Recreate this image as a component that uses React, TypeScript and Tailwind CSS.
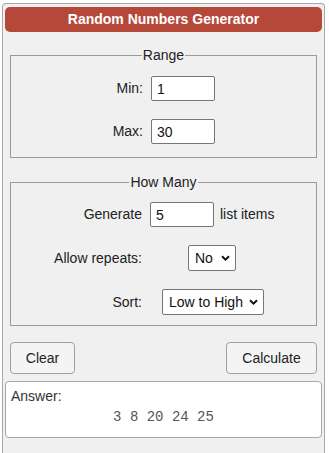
import React from "react";

function Chevron() {
  return (
    <svg width="9" height="6" viewBox="0 0 9 6" className="absolute right-[6px] top-1/2 -translate-y-1/2 pointer-events-none">
      <path d="M1 1.2 L4.5 4.6 L8 1.2" fill="none" stroke="#111" strokeWidth="1.9" />
    </svg>
  );
}

function Select({ value, options, w }: { value: string; options: string[]; w: string }) {
  return (
    <div className={`relative h-[26px] ${w}`}>
      <select
        defaultValue={value}
        className="appearance-none w-full h-full bg-white border border-[#767676] rounded-[2px] pl-[6px] pr-[16px] text-[14px] text-[#111] outline-none"
        style={{ fontFamily: '"Liberation Sans", Arial, sans-serif' }}
      >
        {options.map((o) => (
          <option key={o}>{o}</option>
        ))}
      </select>
      <Chevron />
    </div>
  );
}

function NumInput({ value }: { value: string }) {
  return (
    <input
      type="text"
      defaultValue={value}
      className="w-[64px] h-[25px] bg-white border border-[#767676] rounded-[2px] px-[5px] text-[14px] text-[#111] outline-none"
      style={{ fontFamily: '"Liberation Sans", Arial, sans-serif' }}
    />
  );
}

export default function App() {
  return (
    <div
      className="min-h-screen bg-white text-[14px] text-[#222] overflow-hidden"
      style={{ fontFamily: '"Liberation Sans", Arial, sans-serif' }}
    >
      <div className="ml-[2px] mt-[3px] w-[323px] h-[450px] border border-b-0 border-[#a8a8a8] rounded-t-[4px] bg-[#f0f0f0] px-[2px] pt-[3px]">
        <div className="h-[25px] rounded-[5px] bg-[#b6483a] text-white font-bold text-[14px] leading-[25px] text-center">
          Random Numbers Generator
        </div>

        <fieldset className="mx-[5px] mt-[15px] border border-[#9a9a9a] pb-[13px]">
          <legend className="mx-auto px-[1px] leading-[16px]">Range</legend>
          <div className="flex flex-col gap-[18px] pt-[13px]">
            <div className="flex items-center">
              <span className="w-[132px] text-right">Min:</span>
              <div className="ml-[8px]">
                <NumInput value="1" />
              </div>
            </div>
            <div className="flex items-center">
              <span className="w-[132px] text-right">Max:</span>
              <div className="ml-[8px]">
                <NumInput value="30" />
              </div>
            </div>
          </div>
        </fieldset>

        <fieldset className="mx-[5px] mt-[16px] border border-[#9a9a9a] pb-[10px]">
          <legend className="mx-auto px-[1px] leading-[16px]">How Many</legend>
          <div className="flex flex-col gap-[18px] pt-[12px]">
            <div className="flex items-center">
              <span className="w-[131px] text-right">Generate</span>
              <div className="ml-[8px]">
                <NumInput value="5" />
              </div>
              <span className="ml-[6px]">list items</span>
            </div>
            <div className="flex items-center">
              <span className="w-[131px] text-right">Allow repeats:</span>
              <div className="ml-[46px]">
                <Select value="No" options={["No", "Yes"]} w="w-[48px]" />
              </div>
            </div>
            <div className="flex items-center">
              <span className="w-[131px] text-right">Sort:</span>
              <div className="ml-[20px]">
                <Select value="Low to High" options={["Low to High", "High to Low", "None"]} w="w-[102px]" />
              </div>
            </div>
          </div>
        </fieldset>

        <div className="mx-[5px] mt-[16px] flex justify-between">
          <button className="w-[65px] h-[32px] bg-[#f4f4f4] border border-[#a0a0a0] rounded-[4px] text-[14px] text-[#222]">
            Clear
          </button>
          <button className="w-[91px] h-[32px] bg-[#f4f4f4] border border-[#a0a0a0] rounded-[4px] text-[14px] text-[#222]">
            Calculate
          </button>
        </div>

        <div className="mt-[7px] h-[57px] bg-white border border-[#a8a8a8] rounded-[4px] px-[5px] pt-[6px]">
          <div className="leading-[16px] text-[#333]">Answer:</div>
          <div
            className="mt-[5px] text-center leading-[16px] text-[14px] text-[#555]"
            style={{ fontFamily: '"Liberation Mono", "Courier New", monospace' }}
          >
            3 8 20 24 25
          </div>
        </div>
      </div>
    </div>
  );
}
